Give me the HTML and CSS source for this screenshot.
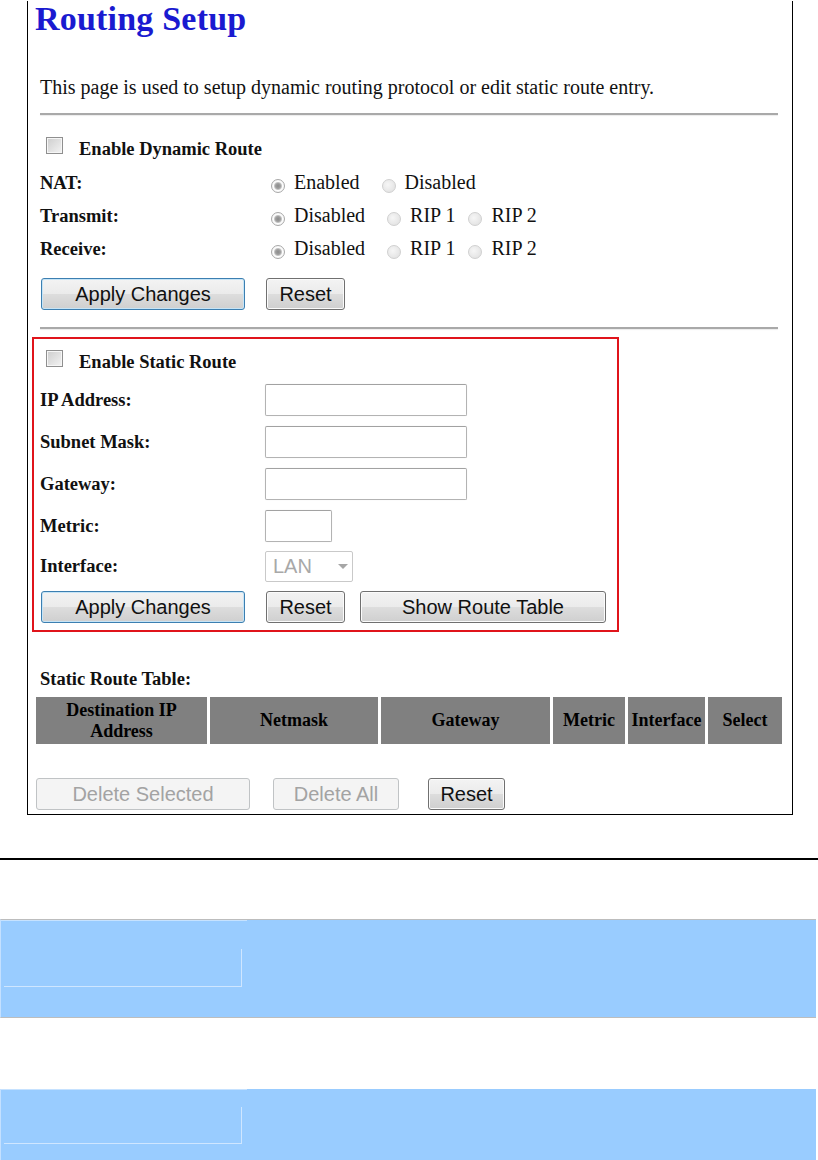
FILE: index.html
```html
<!DOCTYPE html>
<html lang="en">
<head>
    <meta charset="UTF-8">
    <title>Routing Setup</title>
    <link rel="stylesheet" href="styles.css">
</head>
<body>
    <div class="frame">
        <h1 class="title">Routing Setup</h1>
        <p class="intro">This page is used to setup dynamic routing protocol or edit static route entry.</p>
        <div class="rule"></div>

        <!-- Dynamic route -->
        <div class="check-row check-row-first">
            <input type="checkbox" class="checkbox"><span>Enable Dynamic Route</span>
        </div>
        <div class="field-row">
            <span class="label">NAT:</span>
            <label class="option"><input type="radio" class="radio on" checked disabled>Enabled</label>
            <label class="option option-wide"><input type="radio" class="radio" disabled>Disabled</label>
        </div>
        <div class="field-row">
            <span class="label">Transmit:</span>
            <label class="option"><input type="radio" class="radio on" checked disabled>Disabled</label>
            <label class="option option-wide"><input type="radio" class="radio" disabled>RIP 1</label>
            <label class="option option-near"><input type="radio" class="radio" disabled>RIP 2</label>
        </div>
        <div class="field-row">
            <span class="label">Receive:</span>
            <label class="option"><input type="radio" class="radio on" checked disabled>Disabled</label>
            <label class="option option-wide"><input type="radio" class="radio" disabled>RIP 1</label>
            <label class="option option-near"><input type="radio" class="radio" disabled>RIP 2</label>
        </div>
        <div class="btn-row">
            <button class="btn btn-apply btn-focus">Apply Changes</button>
            <button class="btn btn-reset">Reset</button>
        </div>
        <div class="rule rule-lower"></div>

        <!-- Static route -->
        <div class="static-box">
            <div class="check-row">
                <input type="checkbox" class="checkbox"><span>Enable Static Route</span>
            </div>
            <div class="input-row">
                <span class="label">IP Address:</span>
                <input type="text" class="textbox">
            </div>
            <div class="input-row">
                <span class="label">Subnet Mask:</span>
                <input type="text" class="textbox">
            </div>
            <div class="input-row">
                <span class="label">Gateway:</span>
                <input type="text" class="textbox">
            </div>
            <div class="input-row">
                <span class="label">Metric:</span>
                <input type="text" class="textbox textbox-small">
            </div>
            <div class="input-row input-row-select">
                <span class="label">Interface:</span>
                <div class="select"><span>LAN</span><span class="caret"></span></div>
            </div>
            <div class="btn-row btn-row-static">
                <button class="btn btn-apply btn-focus">Apply Changes</button>
                <button class="btn btn-reset">Reset</button>
                <button class="btn btn-show">Show Route Table</button>
            </div>
        </div>

        <div class="table-title">Static Route Table:</div>
        <table class="route-table">
            <tr>
                <th class="col-dest">Destination IP<br>Address</th>
                <th class="col-mask">Netmask</th>
                <th class="col-gw">Gateway</th>
                <th class="col-metric">Metric</th>
                <th class="col-iface">Interface</th>
                <th class="col-select">Select</th>
            </tr>
        </table>
        <div class="btn-row btn-row-bottom">
            <button class="btn btn-delete" disabled>Delete Selected</button>
            <button class="btn btn-delete-all" disabled>Delete All</button>
            <button class="btn btn-reset-table">Reset</button>
        </div>
    </div>

    <div class="page-line"></div>

    <div class="band band-first">
        <div class="band-cap"></div>
        <div class="band-cell">
            <div class="band-gap"></div>
            <div class="band-box"></div>
        </div>
    </div>

    <div class="band band-second">
        <div class="band-cap"></div>
        <div class="band-cell">
            <div class="band-gap band-gap-short"></div>
            <div class="band-box band-box-short"></div>
        </div>
    </div>
</body>
</html>
```

FILE: styles.css
```css
* {
    box-sizing: border-box;
}

body {
    margin: 0;
    background-color: #fff;
    color: #111;
    font-family: "Liberation Serif", "Times New Roman", serif;
}

.frame {
    width: 766px;
    height: 814px;
    margin-left: 27px;
    padding-left: 12px;
    border: 1px solid #000;
    border-top: none;
}

.title {
    margin: 1px 0 0 -5px;
    font-size: 34px;
    line-height: 36px;
    letter-spacing: 0.2px;
    font-weight: bold;
    color: #1a1ad0;
}

.intro {
    margin: 38px 0 0;
    font-size: 20px;
    line-height: 24px;
}

.rule {
    width: 738px;
    height: 2px;
    margin-top: 14px;
    background-color: #a9a9a9;
    box-shadow: 0 1px 1px rgba(0, 0, 0, 0.08);
}

.rule-lower {
    margin-top: 17px;
}

/* checkbox rows */
.check-row {
    height: 33px;
    line-height: 33px;
    font-size: 18.5px;
    font-weight: bold;
}

.check-row-first {
    margin-top: 18px;
}

.checkbox {
    appearance: none;
    width: 17px;
    height: 17px;
    margin: 0 16px 0 6px;
    vertical-align: 1px;
    border: 1px solid #8f8f8f;
    background: linear-gradient(135deg, #cdcdcd, #f3f3f3);
    box-shadow: inset 0 0 0 1px #f6f6f6;
}

/* radio rows */
.field-row {
    display: flex;
    align-items: baseline;
    height: 33px;
    line-height: 33px;
    font-size: 20px;
}

.label {
    display: inline-block;
    width: 225px;
    flex-shrink: 0;
    font-size: 18.5px;
    font-weight: bold;
}

.option {
    white-space: nowrap;
}

.option-wide {
    margin-left: 16px;
}

.option-near {
    margin-left: 7px;
}

.radio {
    appearance: none;
    width: 14px;
    height: 14px;
    margin: 0 9px 0 6px;
    vertical-align: -4px;
    border-radius: 50%;
    border: 1px solid #d0d0d0;
    background: radial-gradient(circle at 40% 40%, #f6f6f6, #dedede);
}

.radio.on {
    border-color: #a8a8a8;
    background: radial-gradient(circle, #8a8a8a 0, #a0a0a0 2.5px, #c4c4c4 3.5px, #fdfdfd 4.5px, #ececec 100%);
}

/* buttons */
.btn-row {
    display: flex;
    height: 32px;
    margin-top: 13px;
}

.btn {
    height: 32px;
    padding: 0;
    font-family: "Liberation Sans", Arial, sans-serif;
    font-size: 20px;
    line-height: 30px;
    color: #111;
    border: 1px solid #707070;
    border-radius: 3px;
    background: linear-gradient(#f3f3f3 0%, #ebebeb 50%, #dddddd 51%, #cfcfcf 100%);
    box-shadow: inset 0 0 0 1px #fbfbfb;
}

.btn-focus {
    border-color: #3c7fb1;
    box-shadow: inset 0 0 0 1px #c6e4f6;
}

.btn:disabled {
    color: #a3a3a3;
    border-color: #c0c3c5;
    background: #f4f4f4;
    box-shadow: none;
}

.btn-apply {
    width: 204px;
    margin-left: 1px;
}

.btn-reset {
    width: 79px;
    margin-left: 21px;
}

.btn-show {
    width: 246px;
    margin-left: 15px;
}

.btn-row-static {
    margin-top: 5px;
}

.btn-row-bottom {
    margin-top: 31px;
}

.btn-delete {
    width: 214px;
    margin-left: -4px;
}

.btn-delete-all {
    width: 126px;
    margin-left: 23px;
}

.btn-reset-table {
    width: 77px;
    margin-left: 29px;
}

/* static route box */
.static-box {
    width: 587px;
    margin: 8px 0 0 -8px;
    padding: 7px 0 7px 6px;
    border: 2px solid #e0141b;
}

.input-row {
    display: flex;
    align-items: center;
    height: 42px;
}

.input-row-select {
    height: 39px;
}

.textbox {
    width: 202px;
    height: 32px;
    margin: 0;
    padding: 0 4px;
    border: 1px solid #b3b3b3;
    border-top-color: #a2a2a2;
    border-radius: 2px;
    background-color: #fff;
    box-shadow: 0 0 1px rgba(0, 0, 0, 0.12);
}

.textbox-small {
    width: 67px;
}

.select {
    display: flex;
    align-items: center;
    width: 88px;
    height: 31px;
    padding-left: 7px;
    border: 1px solid #c9c9c9;
    border-radius: 2px;
    font-family: "Liberation Sans", Arial, sans-serif;
    font-size: 20px;
    color: #a8a8a8;
}

.caret {
    width: 0;
    height: 0;
    margin-left: 26px;
    border-left: 5px solid transparent;
    border-right: 5px solid transparent;
    border-top: 5px solid #a6a6a6;
}

/* route table */
.table-title {
    margin-top: 35px;
    font-size: 18.5px;
    line-height: 24px;
    font-weight: bold;
}

.route-table {
    width: 752px;
    margin: 3px 0 0 -7px;
    border-spacing: 3px;
    table-layout: fixed;
}

.route-table th {
    height: 47px;
    padding: 0;
    background-color: #808080;
    color: #000;
    font-size: 18px;
    line-height: 21px;
    font-weight: bold;
}

.col-dest { width: 171px; }
.col-mask { width: 168px; }
.col-gw { width: 169px; }
.col-metric { width: 72px; }
.col-iface { width: 77px; }
.col-select { width: 74px; }

/* below the frame */
.page-line {
    width: 818px;
    height: 2px;
    margin-top: 43px;
    background-color: #000;
}

.band {
    width: 816px;
    background-color: #99ccff;
    border-left: 1px solid #c4e0ff;
}

.band-first {
    height: 99px;
    margin-top: 59px;
    border-top: 1px solid #bdbdbd;
    border-bottom: 1px solid #bdbdbd;
}

.band-second {
    height: 80px;
    margin-top: 71px;
}

.band-cap {
    width: 246px;
    height: 1px;
    background-color: #c6e2ff;
}

.band-cell {
    width: 238px;
    margin-left: 3px;
}

.band-gap {
    height: 28px;
}

.band-gap-short {
    height: 17px;
}

.band-box {
    height: 38px;
    border-right: 1px solid #cfe6ff;
    border-bottom: 1px solid #cfe6ff;
}

.band-box-short {
    height: 37px;
}
```
